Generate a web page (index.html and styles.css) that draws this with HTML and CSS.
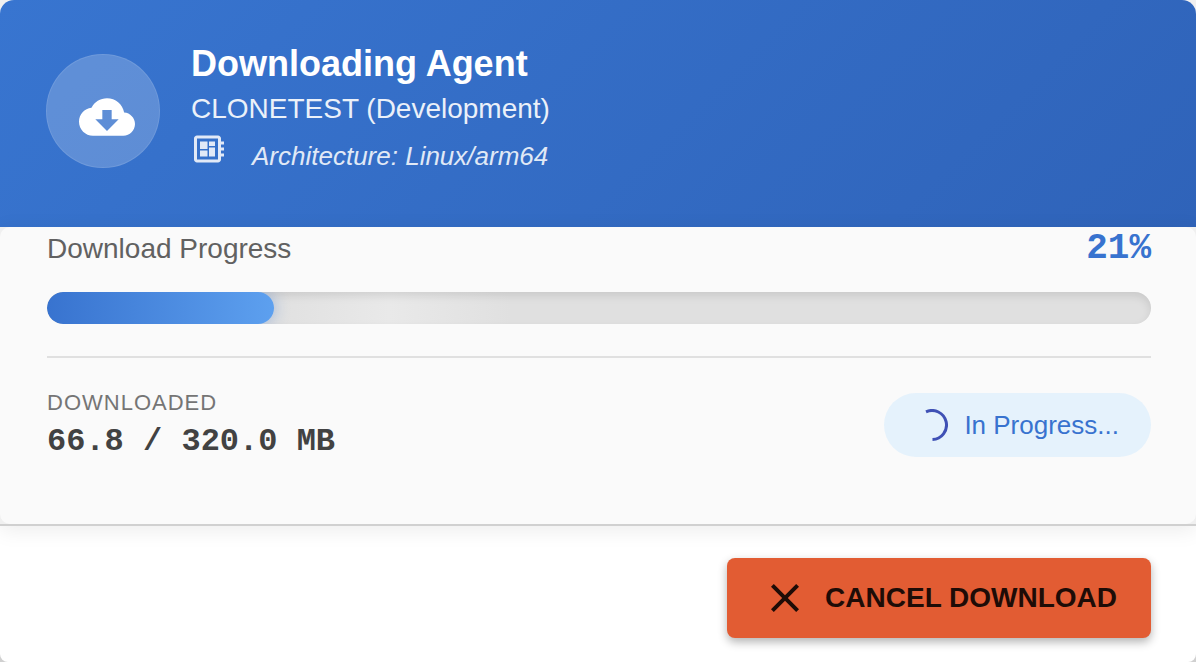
FILE: index.html
```html
<!DOCTYPE html>
<html lang="en">
<head>
    <meta charset="UTF-8">
    <meta name="viewport" content="width=device-width, initial-scale=1.0">
    <title>Downloading Agent</title>
    <link rel="stylesheet" href="styles.css">
</head>
<body>
    <div class="dialog">
        <header class="dialog-header">
            <div class="header-icon">
                <svg viewBox="0 0 24 24" aria-hidden="true">
                    <path fill-rule="evenodd" d="M19.35 10.04C18.67 6.59 15.64 4 12 4 9.11 4 6.6 5.64 5.35 8.04 2.34 8.36 0 10.91 0 14c0 3.31 2.69 6 6 6h13c2.76 0 5-2.24 5-5 0-2.64-2.05-4.78-4.65-4.96zM17 13l-5 5-5-5h3V9h4v4h3z"/>
                </svg>
            </div>
            <div class="header-text">
                <h1>Downloading Agent</h1>
                <p class="subtitle">CLONETEST (Development)</p>
                <div class="architecture">
                    <svg viewBox="0 0 24 24" aria-hidden="true">
                        <path d="M22 9V7h-2V5c0-1.100-.9-2-2-2H4c-1.100 0-2 .9-2 2v14c0 1.100.9 2 2 2h14c1.100 0 2-.9 2-2v-2h2v-2h-2v-2h2v-2h-2V9h2zm-4 10H4V5h14v14zM6 13h5v4H6zm6-6h4v3h-4zM6 7h5v5H6zm6 4h4v6h-4z"/>
                    </svg>
                    <span>Architecture: Linux/arm64</span>
                </div>
            </div>
        </header>

        <div class="dialog-body">
            <main class="content">
                <div class="progress-header">
                    <span id="progressLabel">Download Progress</span>
                    <span class="progress-percent">21%</span>
                </div>
                <div class="progress-track" role="progressbar" aria-labelledby="progressLabel" aria-valuemin="0" aria-valuemax="100" aria-valuenow="21">
                    <div class="progress-fill" style="width: 20.6%"></div>
                </div>

                <div class="details">
                    <div class="downloaded">
                        <div class="detail-label">Downloaded</div>
                        <div class="detail-value">66.8 / 320.0 MB</div>
                    </div>
                    <div class="status">
                        <svg class="spinner" viewBox="0 0 32 32" aria-hidden="true">
                            <path d="M10 2.800A14.500 14.500 0 1 1 16.500 30.500"/>
                        </svg>
                        <span>In Progress...</span>
                    </div>
                </div>
            </main>
        </div>

        <footer class="actions">
            <button type="button" class="btn-cancel">
                <svg viewBox="0 0 24 24" aria-hidden="true">
                    <path d="M19 6.410 17.590 5 12 10.590 6.410 5 5 6.410 10.590 12 5 17.590 6.410 19 12 13.410 17.590 19 19 17.590 13.410 12z"/>
                </svg>
                <span>Cancel Download</span>
            </button>
        </footer>
    </div>
</body>
</html>
```

FILE: styles.css
```css
* {
    box-sizing: border-box;
}

body {
    margin: 0;
    background: linear-gradient(#f0f0f0 50%, #d0d0d0 90%);
    font-family: "Liberation Sans", Arial, sans-serif;
}

h1, p {
    margin: 0;
}

.dialog {
    display: flex;
    flex-direction: column;
    min-height: 100vh;
    background: white;
    border-radius: 14px 14px 8px 8px;
    overflow: hidden;
}

.dialog-header {
    display: flex;
    align-items: center;
    gap: 31px;
    padding: 41px 46px 46px;
    background: linear-gradient(135deg, #3875d0 0%, #2f63b9 100%);
    color: white;
}

.header-icon {
    display: flex;
    align-items: center;
    justify-content: center;
    width: 114px;
    height: 114px;
    padding: 12px 0 0 8px;
    border-radius: 50%;
    border: 1px solid rgba(255,255,255,0.1);
    background: rgba(255,255,255,0.2);
}

.header-icon svg {
    width: 56px;
    height: 56px;
    fill: white;
}

h1 {
    font-size: 36px;
    font-weight: bold;
    line-height: 46px;
}

.subtitle {
    font-size: 28px;
    line-height: 44px;
    opacity: 0.9;
}

.architecture {
    display: flex;
    align-items: flex-start;
    gap: 25px;
    font-size: 26px;
    font-style: italic;
    line-height: 50px;
    opacity: 0.85;
}

.architecture svg {
    width: 36px;
    height: 36px;
    fill: white;
}

.dialog-body {
    background: #f0f0f0;
    border-bottom: 2px solid #d0d0d0;
    box-shadow: 0 4px 20px rgba(0,0,0,0.08);
}

.content {
    padding: 0 45px 62px 47px;
    background: #fafafa;
    border-radius: 10px;
}

.progress-header {
    display: flex;
    align-items: center;
    justify-content: space-between;
    margin-bottom: 21px;
    font-size: 28px;
    line-height: 44px;
    color: #616161;
}

.progress-percent {
    font-family: "Liberation Mono", "Courier New", monospace;
    font-size: 36px;
    font-weight: bold;
    line-height: 40px;
    color: #3873cf;
}

.progress-track {
    height: 32px;
    border-radius: 16px;
    background: linear-gradient(90deg, #e0e0e0 20%, #e9e9e9 31%, #e0e0e0 42%);
    box-shadow: inset 0 4px 8px rgba(0,0,0,0.1);
    overflow: hidden;
}

.progress-fill {
    height: 100%;
    border-radius: 16px;
    background: linear-gradient(90deg, #3873cf 0%, #5da0ef 100%);
    box-shadow: 0 0 16px rgba(56,115,207,0.4);
}

.details {
    display: flex;
    align-items: center;
    justify-content: space-between;
    margin-top: 32px;
    padding-top: 30px;
    border-top: 2px solid #e0e0e0;
}

.downloaded {
    display: flex;
    flex-direction: column;
    gap: 4px;
}

.detail-label {
    font-size: 22px;
    line-height: 30px;
    letter-spacing: 1px;
    text-transform: uppercase;
    color: #757575;
}

.detail-value {
    font-family: "Liberation Mono", "Courier New", monospace;
    font-size: 32px;
    font-weight: bold;
    line-height: 40px;
    color: #424242;
}

.status {
    display: flex;
    align-items: center;
    gap: 16px;
    height: 64px;
    padding: 0 32px;
    border-radius: 32px;
    background: #e5f2fc;
    font-size: 26px;
    line-height: 32px;
    color: #3873cf;
}

.spinner {
    width: 32px;
    height: 32px;
    fill: none;
    stroke: #3f51b5;
    stroke-width: 3;
}

.actions {
    display: flex;
    justify-content: flex-end;
    padding: 32px 45px 24px;
}

.btn-cancel {
    display: flex;
    align-items: center;
    gap: 16px;
    height: 80px;
    padding: 0 34px;
    border: none;
    border-radius: 8px;
    background: #e25c33;
    box-shadow: 0 4px 10px rgba(0,0,0,0.3);
    font-family: inherit;
    font-size: 28px;
    font-weight: bold;
    text-transform: uppercase;
    color: #1e0c07;
    cursor: pointer;
}

.btn-cancel svg {
    width: 48px;
    height: 48px;
    fill: #1e0c07;
}
```
